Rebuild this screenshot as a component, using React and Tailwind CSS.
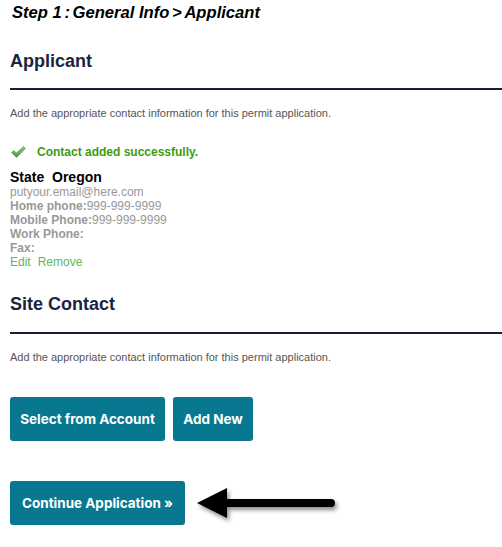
export default function App() {
  const arial = { fontFamily: '"Liberation Sans", Arial, sans-serif' };
  return (
    <div className="w-[502px] h-[547px] bg-white overflow-hidden text-black" style={arial}>
      <div className="pl-[12px] pt-[3px] text-[16.6px] leading-[20px] font-bold italic">
        Step 1<span className="tracking-[-2px]"> </span>:<span className="tracking-[-2px]"> </span>General Info<span className="tracking-[-2px]"> </span>&gt;<span className="tracking-[-2px]"> </span>Applicant
      </div>

      <div className="pl-[10px]">
        <h2 className="mt-[27px] text-[18px] leading-[22px] font-bold text-[#1b2440]">Applicant</h2>
        <div className="mt-[16px] h-[2px] bg-[#151f3c]" />
        <p className="mt-[17px] text-[11px] leading-[13px] text-[#555]">
          Add the appropriate contact information for this permit application.
        </p>

        <div className="mt-[24px] flex items-center h-[16px]">
          <svg width="15" height="12" viewBox="0 0 15 12" className="ml-[1px]">
            <defs>
              <linearGradient id="g" x1="0" y1="0" x2="0" y2="1">
                <stop offset="0" stopColor="#8fd07a" />
                <stop offset="1" stopColor="#3f9a33" />
              </linearGradient>
            </defs>
            <path d="M0.5 6.5 L3 4.5 L5.5 7 L12.5 0.5 L14.5 2.5 L5.5 11.5 Z" fill="url(#g)" stroke="#4c9a40" strokeWidth="0.6" strokeLinejoin="round" />
          </svg>
          <span className="ml-[11px] text-[12px] font-bold text-[#3d9c12]">Contact added successfully.</span>
        </div>

        <div className="mt-[9px] text-[14px] leading-[16px] font-bold text-black whitespace-pre">State  Oregon</div>
        <div className="text-[12px] leading-[14px] text-[#999]">
          <div>putyour.email@here.com</div>
          <div><span className="font-bold">Home phone:</span>999-999-9999</div>
          <div><span className="font-bold">Mobile Phone:</span>999-999-9999</div>
          <div className="font-bold">Work Phone:</div>
          <div className="font-bold">Fax:</div>
          <div className="text-[#5cb85c]">Edit<span className="ml-[7px]">Remove</span></div>
        </div>

        <h2 className="mt-[24px] text-[18px] leading-[22px] font-bold text-[#1b2440]">Site Contact</h2>
        <div className="mt-[17px] h-[2px] bg-[#151f3c]" />
        <p className="mt-[17px] text-[11px] leading-[13px] text-[#555]">
          Add the appropriate contact information for this permit application.
        </p>

        <div className="mt-[33px] flex gap-[8px]" style={{ fontFamily: 'Inter, "Liberation Sans", sans-serif' }}>
          <button className="h-[44px] w-[155px] rounded-[3px] bg-[#07788f] text-white text-[13.5px] font-bold">
            Select from Account
          </button>
          <button className="h-[44px] w-[80px] rounded-[3px] bg-[#07788f] text-white text-[13.5px] font-bold">
            Add New
          </button>
        </div>

        <div className="mt-[40px] flex items-center" style={{ fontFamily: 'Inter, "Liberation Sans", sans-serif' }}>
          <button className="h-[44px] w-[175px] rounded-[3px] bg-[#07788f] text-white text-[13.5px] font-bold">
            Continue Application »
          </button>
          <svg width="150" height="44" viewBox="0 0 150 44" className="ml-[8px]">
            <defs>
              <filter id="sh" x="-20%" y="-50%" width="140%" height="200%">
                <feDropShadow dx="2" dy="3" stdDeviation="2" floodColor="#000" floodOpacity="0.45" />
              </filter>
            </defs>
            <g filter="url(#sh)">
              <path d="M4 22 L34 7 L34 18 L138 18 A4 4 0 0 1 138 26 L34 26 L34 37 Z" fill="#000" />
            </g>
          </svg>
        </div>
      </div>
    </div>
  );
}
